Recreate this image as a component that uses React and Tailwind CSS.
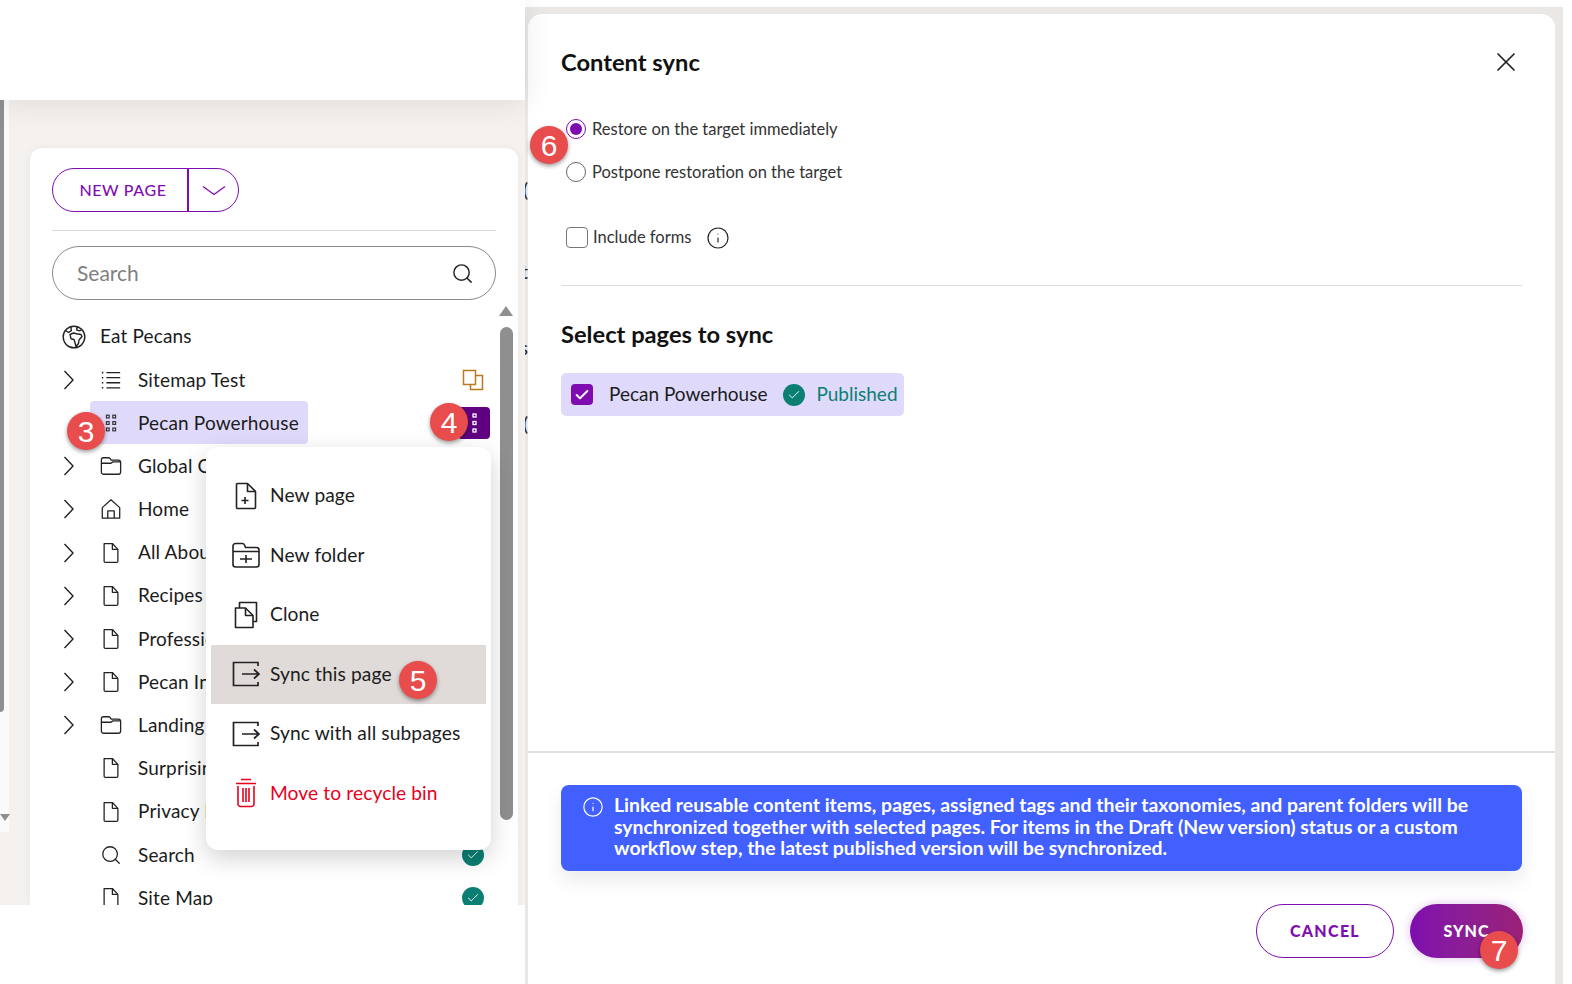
import React from 'react';
import { Search, X, Info, Check } from 'lucide-react';

const font = "font-['Lato','Noto_Sans',sans-serif]";

function Chevron() {
  return (
    <svg width="11" height="20" viewBox="0 0 11 20" fill="none" stroke="#222" strokeWidth="1.4">
      <path d="M1.500 1l8.500 9-8.500 9" />
    </svg>
  );
}

function GlobeIcon() {
  return (
    <svg width="24" height="24" viewBox="0 0 24 24" fill="none" stroke="#222" strokeWidth="1.4" strokeLinejoin="round">
      <circle cx="12" cy="12" r="10.800" />
      <path d="M8 9.500l3.500-1.500 3 .8 4.500.7 1 2-3 3.500-.5 3.500-2.500 3-1.200-4.500-.8-2.500-3-.8z" />
      <path d="M3.500 5.500l3 2 2.800-1.800-.3-3.800M15.500 1.800l-1 3 3 1 2-1" />
    </svg>
  );
}

function HomeIcon() {
  return (
    <svg width="24" height="24" viewBox="0 0 24 24" fill="none" stroke="#222" strokeWidth="1.4" strokeLinejoin="round">
      <path d="M2.500 22V10.500L12 2l9.500 8.500V22zM8.500 22v-8h7v8" />
    </svg>
  );
}

function FileIcon() {
  return (
    <svg width="24" height="24" viewBox="0 0 24 24" fill="none" stroke="#222" strokeWidth="1.4" strokeLinejoin="round">
      <path d="M4.500 1.700h9l6 6.300v13a1.300 1.300 0 0 1-1.300 1.300H5.800A1.300 1.300 0 0 1 4.500 21z" />
      <path d="M13.500 1.700V8h6" />
    </svg>
  );
}

function FolderIcon() {
  return (
    <svg width="24" height="22" viewBox="0 0 24 22" fill="none" stroke="#222" strokeWidth="1.4" strokeLinejoin="round">
      <path d="M1.500 4.500a2.500 2.500 0 0 1 2.500-2.500h5.500c1 0 1.500.5 2 1.500l.5 1h8a2.500 2.500 0 0 1 2.500 2.500v10.500a2.500 2.500 0 0 1-2.500 2.500H4a2.500 2.500 0 0 1-2.500-2.500z" />
      <path d="M1.500 8h10.500l2-1.500h8.500" />
    </svg>
  );
}

function ListIcon() {
  return (
    <svg width="24" height="24" viewBox="0 0 24 24" fill="none" stroke="#222" strokeWidth="1.4">
      <path d="M7 4h15M7 9.500h15M7 15h15M7 20.500h15" />
      <path d="M2 4h1.600M2 9.500h1.600M2 15h1.600M2 20.500h1.600" strokeWidth="1.800" />
    </svg>
  );
}

function GripIcon() {
  return (
    <svg width="24" height="24" viewBox="0 0 24 24" fill="none" stroke="#333" strokeWidth="1.300">
      {[5, 12, 19].map((y) => (
        <g key={y}>
          <rect x="7" y={y - 1.5} width="3" height="3" />
          <rect x="14" y={y - 1.5} width="3" height="3" />
        </g>
      ))}
    </svg>
  );
}

function CopyIcon() {
  return (
    <svg width="22" height="22" viewBox="0 0 22 22" fill="none" stroke="#b8791f" strokeWidth="1.500">
      <rect x="1.500" y="1.500" width="12" height="14" />
      <path d="M13.500 6.500h7v14h-12v-5" />
    </svg>
  );
}

function PublishedDot() {
  return (
    <span className="flex w-[22px] h-[22px] items-center justify-center rounded-full bg-[#0b7f72]">
      <Check className="w-[14px] h-[14px] text-white" strokeWidth={1.6} />
    </span>
  );
}

function Badge({ n, className }) {
  return (
    <span className={`absolute z-30 flex w-[38px] h-[38px] items-center justify-center rounded-full bg-[#e84c4c] text-white text-[30px] font-['Liberation_Sans',sans-serif] shadow-[0_2px_4px_rgba(0,0,0,0.4)] ${className}`}>
      {n}
    </span>
  );
}

function TreeRow({ icon, label, chevron = true, selected = false, trailing }) {
  return (
    <div className="flex h-[43.2px] items-center">
      <div className="flex w-[38px] justify-start pl-[11px]">
        {chevron && <Chevron />}
      </div>
      <div className={`flex h-[43px] items-center gap-[16px] pl-[10px] pr-[9px] rounded-[4px] ${selected ? 'bg-[#dfdafb]' : ''}`}>
        <span className="flex w-[22px] justify-center">{icon}</span>
        <span className="text-[19px] tracking-[0.15px] text-[#1c1c1c] whitespace-nowrap">{label}</span>
      </div>
      {trailing && <div className="ml-auto">{trailing}</div>}
    </div>
  );
}

function MenuItem({ icon, label, active, danger }) {
  return (
    <div className={`flex h-[59.5px] items-center gap-[10px] pl-[21px] ${active ? 'bg-[#e0dbd8]' : ''}`}>
      <span className="flex w-[28px] justify-center">{icon}</span>
      <span className={`text-[19.2px] tracking-[0.1px] whitespace-nowrap ${danger ? 'text-[#e8001c]' : 'text-[#1c1c1c]'}`}>{label}</span>
    </div>
  );
}

function SyncIcon() {
  return (
    <svg width="28" height="26" viewBox="0 0 28 26" fill="none" stroke="#222" strokeWidth="1.700">
      <path d="M26 5V1.500H1.500v23H26V21" />
      <path d="M10 13h17M22 8.500l5 4.500-5 4.500" />
    </svg>
  );
}

const menuIcons = {
  page: (
    <svg width="22" height="28" viewBox="0 0 22 28" fill="none" stroke="#222" strokeWidth="1.600" strokeLinejoin="round">
      <path d="M1.500 2.500a1 1 0 0 1 1-1h10l8 8v16a1 1 0 0 1-1 1h-17a1 1 0 0 1-1-1z" />
      <path d="M12.500 1.500v8h8M6.500 18.500h7M10 15v7" />
    </svg>
  ),
  folder: (
    <svg width="28" height="26" viewBox="0 0 28 26" fill="none" stroke="#222" strokeWidth="1.600" strokeLinejoin="round">
      <path d="M1 4a2.500 2.500 0 0 1 2.500-2.500h7c1 0 1.500.5 2 1.500l1 2.500h11a2.500 2.500 0 0 1 2.500 2.500v14.500a2.500 2.500 0 0 1-2.500 2.500h-21a2.500 2.500 0 0 1-2.500-2.500z" />
      <path d="M1 9.500h26M8 17h12M14 13v8" />
    </svg>
  ),
  clone: (
    <svg width="24" height="28" viewBox="0 0 24 28" fill="none" stroke="#222" strokeWidth="1.600" strokeLinejoin="round">
      <path d="M5.500 7V1.500h17v19H19" />
      <path d="M1.500 7h10l7.500 7.500v12h-17.500z" />
      <path d="M11.500 7v7.500H19" />
    </svg>
  ),
  trash: (
    <svg width="22" height="30" viewBox="0 0 22 30" fill="none" stroke="#e8001c" strokeWidth="1.600" strokeLinejoin="round">
      <path d="M6 1.500h10M1 5.500h20" />
      <path d="M3 8v18a2.500 2.500 0 0 0 2.500 2.500h11A2.500 2.500 0 0 0 19 26V8" />
      <path d="M8 10v14M11 10v14M14 10v14" />
    </svg>
  ),
};

export default function App() {
  return (
    <div className={`relative flex w-[1572px] h-[984px] overflow-hidden bg-white ${font}`}>
      {/* Left: page tree */}
      <div className="relative flex w-[525px] shrink-0 flex-col">
        <div className="relative z-10 h-[100px] shrink-0 bg-white shadow-[0_4px_28px_rgba(0,0,0,0.09)]" />
        <div className="flex h-[805px] overflow-hidden bg-[#f4f1ef]">
          <div className="relative w-[9px] h-[732px] bg-[#fafafa]">
            <div className="w-[4px] h-[612px] rounded-br-[4px] bg-[#8f8f8f]" />
            <div className="absolute left-0 top-[714px] w-0 h-0 border-x-[5px] border-t-[7px] border-x-transparent border-t-[#8f8f8f]" />
          </div>
          <div className="ml-[21px] mt-[48px] flex w-[488px] flex-col rounded-t-[12px] bg-white pl-[22px] pr-[4px] pt-[20px] shadow-[0_0_8px_rgba(0,0,0,0.05)]">
            <div className="flex h-[44px] w-[187px] shrink-0 rounded-full border border-[#7f0cb0] text-[#7f0cb0]">
              <div className="flex w-[136px] items-center justify-center border-r-2 border-[#7f0cb0] pl-[6px] text-[16px] font-medium tracking-[0.6px]">NEW PAGE</div>
              <div className="flex flex-1 items-center justify-center">
                <svg width="24" height="11" viewBox="0 0 24 11" fill="none" stroke="#7f0cb0" strokeWidth="1.300"><path d="M1 1.500l11 8 11-8" /></svg>
              </div>
            </div>
            <div className="mt-[18px] h-px w-[444px] shrink-0 bg-[#dcdcdc]" />
            <div className="mt-[15px] flex h-[54px] w-[444px] shrink-0 items-center rounded-full border border-[#8a8a8a] pl-[24px] pr-[21px]">
              <span className="text-[21px] text-[#808080]">Search</span>
              <Search className="ml-auto w-[23px] h-[23px] text-[#222]" strokeWidth={1.5} />
            </div>
            <div className="mt-[15px] flex gap-[4px]">
              <div className="w-[443px] shrink-0">
                <div className="flex h-[43.2px] items-center pl-[10px] gap-[14px]">
                  <GlobeIcon />
                  <span className="text-[19px] tracking-[0.15px] text-[#1c1c1c]">Eat Pecans</span>
                </div>
                <TreeRow icon={<ListIcon />} label="Sitemap Test" trailing={<div className="mr-[11px]"><CopyIcon /></div>} />
                <TreeRow chevron={false} selected icon={<GripIcon />} label="Pecan Powerhouse" trailing={
                  <div className="mr-[5px] flex h-[32px] w-[32px] items-center justify-end rounded-[4px] bg-[#5f0080] pr-[12px]">
                    <svg width="6" height="22" viewBox="0 0 6 22" fill="none" stroke="white" strokeWidth="1.300"><rect x="1" y="2" width="3" height="3" /><rect x="1" y="9.500" width="3" height="3" /><rect x="1" y="17" width="3" height="3" /></svg>
                  </div>
                } />
                <TreeRow icon={<FolderIcon />} label="Global Content" />
                <TreeRow icon={<HomeIcon />} label="Home" />
                <TreeRow icon={<FileIcon />} label="All About Pecans" />
                <TreeRow icon={<FileIcon />} label="Recipes" />
                <TreeRow icon={<FileIcon />} label="Professionals" />
                <TreeRow icon={<FileIcon />} label="Pecan Industry" />
                <TreeRow icon={<FolderIcon />} label="Landing Pages" />
                <TreeRow chevron={false} icon={<FileIcon />} label="Surprising Facts" />
                <TreeRow chevron={false} icon={<FileIcon />} label="Privacy Policy" />
                <TreeRow chevron={false} icon={<Search className="w-[24px] h-[24px] text-[#222]" strokeWidth={1.4} />} label="Search" trailing={<div className="mr-[11px]"><PublishedDot /></div>} />
                <TreeRow chevron={false} icon={<FileIcon />} label="Site Map" trailing={<div className="mr-[11px]"><PublishedDot /></div>} />
              </div>
              <div className="flex w-[14px] shrink-0 flex-col items-center -mt-[9px]">
                <div className="w-0 h-0 border-x-[7px] border-b-[10px] border-x-transparent border-b-[#8f8f8f]" />
                <div className="mt-[11px] h-[493px] w-[13px] rounded-full bg-[#8f8f8f]" />
              </div>
            </div>
          </div>
        </div>

        {/* Context menu */}
        <div className="absolute left-[206px] top-[447px] z-20 flex h-[403px] w-[285px] flex-col rounded-[12px] bg-white pt-[19px] shadow-[0_8px_24px_rgba(0,0,0,0.18)]">
          <div className="mx-[5px]">
            <MenuItem icon={menuIcons.page} label="New page" />
            <MenuItem icon={menuIcons.folder} label="New folder" />
            <MenuItem icon={menuIcons.clone} label="Clone" />
            <MenuItem active icon={<SyncIcon />} label="Sync this page" />
            <MenuItem icon={<SyncIcon />} label="Sync with all subpages" />
            <MenuItem danger icon={menuIcons.trash} label="Move to recycle bin" />
          </div>
        </div>
      </div>

      {/* Right: content sync dialog */}
      <div className="mt-[7px] flex w-[1038px] shrink-0 bg-[#ebe7e4] pr-[9px] pt-[7px]">
        <div className="relative -mt-[7px] w-[3px] shrink-0 overflow-hidden text-[19px] leading-none text-[#222]">
          <span className="absolute right-0 top-[173px]">(</span>
          <span className="absolute right-0 top-[255px]">t</span>
          <span className="absolute right-0 top-[331px]">s</span>
          <span className="absolute right-0 top-[407px]">(</span>
        </div>
        <div className="flex flex-1 flex-col rounded-t-[14px] bg-white">
          <div className="flex h-[739px] shrink-0 flex-col border-b-2 border-[#e0e0e0] px-[33px]">
            <div className="flex items-center justify-between pt-[32px]">
              <h2 className="text-[23.7px] leading-[28px] font-bold text-[#111]">Content sync</h2>
              <X className="w-[32px] h-[32px] text-[#222]" strokeWidth={1.3} />
            </div>
            <div className="mt-[41px] flex h-[20px] items-center gap-[6px] pl-[5px]">
              <span className="flex w-[20px] h-[20px] items-center justify-center rounded-full border border-[#7f0cb0]">
                <span className="w-[12px] h-[12px] rounded-full bg-[#7f0cb0]" />
              </span>
              <span className="text-[16.5px] text-[#333]">Restore on the target immediately</span>
            </div>
            <div className="mt-[23px] flex h-[20px] items-center gap-[6px] pl-[5px]">
              <span className="w-[20px] h-[20px] rounded-full border border-[#666]" />
              <span className="text-[16.5px] text-[#333]">Postpone restoration on the target</span>
            </div>
            <div className="mt-[45px] flex h-[21px] items-center pl-[5px]">
              <span className="w-[22px] h-[21px] rounded-[4px] border border-[#777]" />
              <span className="ml-[5px] text-[16.5px] text-[#333]">Include forms</span>
              <Info className="ml-[15px] w-[24px] h-[24px] text-[#222]" strokeWidth={1.2} />
            </div>
            <div className="mt-[37px] h-px w-[961px] bg-[#dcdcdc]" />
            <h3 className="mt-[34px] text-[23.7px] leading-[28px] font-bold text-[#111]">Select pages to sync</h3>
            <div className="mt-[25px] flex h-[43px] w-[343px] items-center rounded-[5px] bg-[#dfdafb] pl-[10px]">
              <span className="flex w-[22px] h-[21px] items-center justify-center rounded-[4px] bg-[#7f0cb0]">
                <Check className="w-[16px] h-[16px] text-white" strokeWidth={3} />
              </span>
              <span className="ml-[16px] text-[19px] text-[#1c1c1c]">Pecan Powerhouse</span>
              <span className="ml-[16px]"><PublishedDot /></span>
              <span className="ml-[11px] text-[19px] text-[#0b7f72]">Published</span>
            </div>
          </div>
          <div className="pl-[33px] pr-[32px] pt-[32px]">
            <div className="flex h-[86px] w-[961px] gap-[10px] rounded-[8px] bg-[#4160ff] pl-[21px] pt-[9px] text-white shadow-[0_10px_20px_rgba(0,0,0,0.08)]">
              <Info className="mt-[2px] w-[22px] h-[22px] shrink-0" strokeWidth={1.3} />
              <p className="text-[19.4px] leading-[21.5px] font-bold whitespace-nowrap">
                Linked reusable content items, pages, assigned tags and their taxonomies, and parent folders will be<br />
                synchronized together with selected pages. For items in the Draft (New version) status or a custom<br />
                workflow step, the latest published version will be synchronized.
              </p>
            </div>
            <div className="mt-[33px] flex justify-end gap-[16px]">
              <div className="flex h-[54px] w-[138px] items-center justify-center rounded-full border border-[#7f0cb0] text-[16px] font-black tracking-[1.3px] text-[#7f0cb0]">CANCEL</div>
              <div className="flex h-[54px] w-[113px] items-center justify-center rounded-full bg-gradient-to-r from-[#7f0cb0] to-[#9b1f77] text-[16px] font-black tracking-[1px] text-white shadow-[0_0_10px_rgba(127,12,176,0.25)]">SYNC</div>
            </div>
          </div>
        </div>
      </div>

      <Badge n={3} className="left-[67px] top-[412px]" />
      <Badge n={4} className="left-[430px] top-[403px]" />
      <Badge n={5} className="left-[399px] top-[661px]" />
      <Badge n={6} className="left-[530px] top-[126px]" />
      <Badge n={7} className="left-[1480px] top-[931px]" />
    </div>
  );
}
